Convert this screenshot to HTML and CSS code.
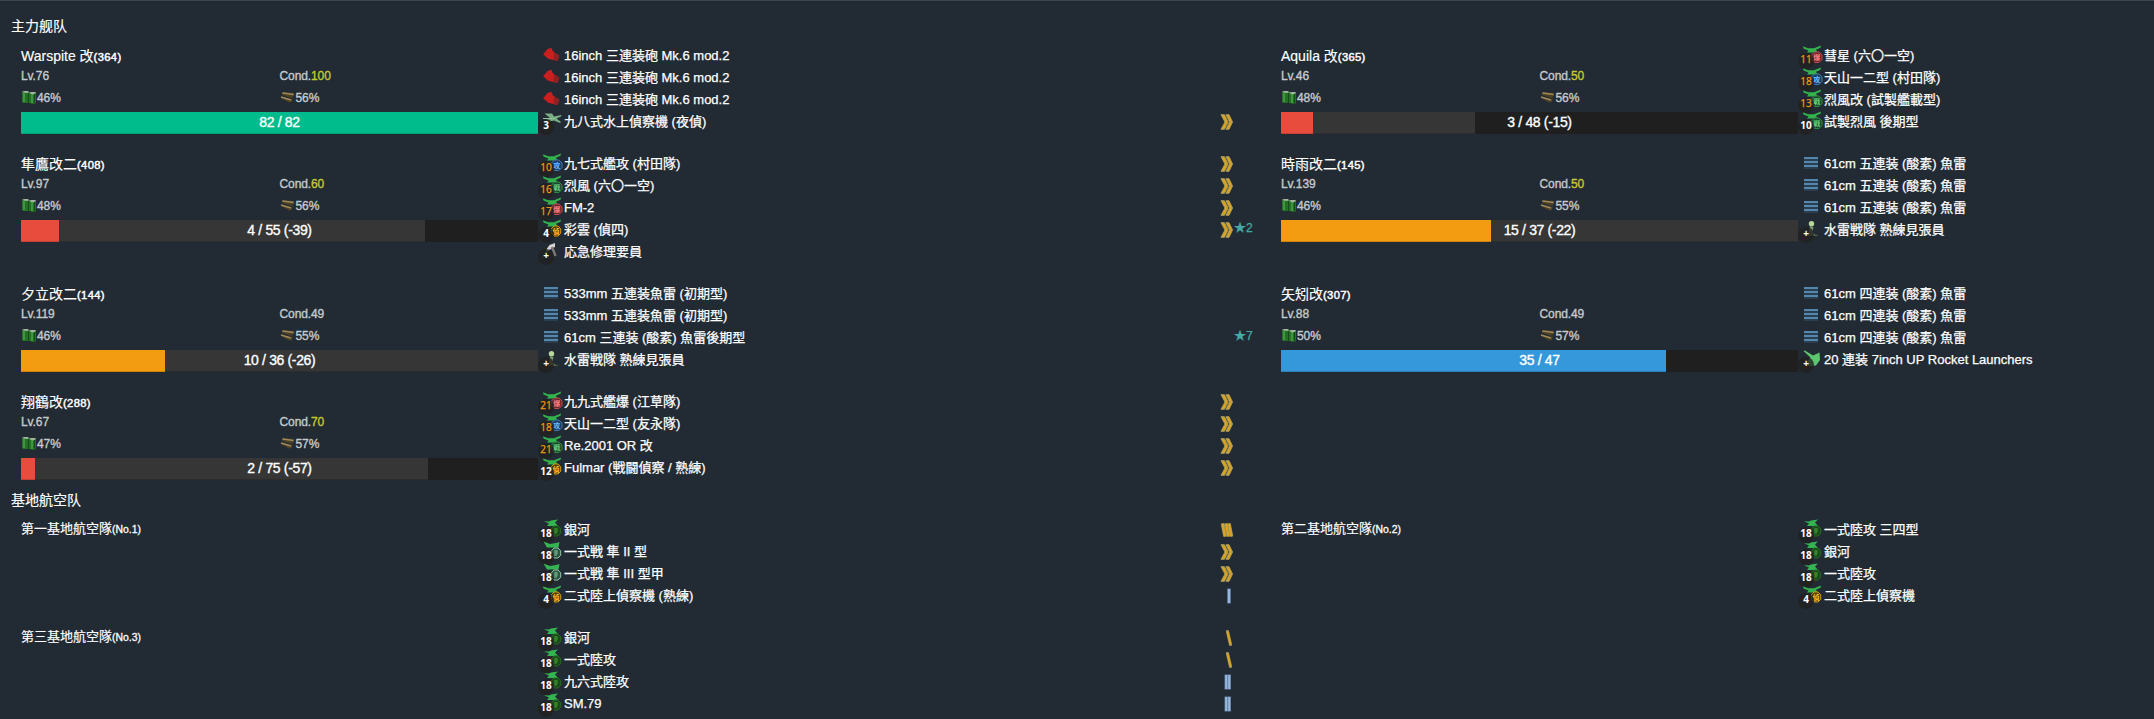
FILE: index.html
```
<!DOCTYPE html>
<html lang="zh">
<head>
<meta charset="utf-8">
<title>主力舰队</title>
<link rel="stylesheet" href="styles.css">
</head>
<body>
<svg class="defs" aria-hidden="true">
  <defs>
    <symbol id="wings" viewBox="0 0 22 22"><path d="M2 2.200 7 4.200h6L20 1.500 19.500 3.800l-4.500 2 1.500 2.700H6L7.500 6.500 2.500 4.600z" fill="#32b34b"/></symbol>
    <symbol id="fighter" viewBox="0 0 22 22"><use href="#wings"/><path d="m13.500 8h4.500l3 3v4.500l-3 3h-4.500l-3-3V11z" fill="#1d4a2c" stroke="#2f8a42"/><text class="glyph" x="15.700" y="15.900" fill="#62cf7d">戦</text></symbol>
    <symbol id="torpedo-bomber" viewBox="0 0 22 22"><use href="#wings"/><path d="m13.500 8h4.500l3 3v4.500l-3 3h-4.500l-3-3V11z" fill="#1f3f60" stroke="#3d77b3"/><text class="glyph" x="15.700" y="15.900" fill="#69bcff">攻</text></symbol>
    <symbol id="dive-bomber" viewBox="0 0 22 22"><use href="#wings"/><path d="m13.500 8h4.500l3 3v4.500l-3 3h-4.500l-3-3V11z" fill="#69292d" stroke="#b94b4f"/><text class="glyph" x="15.700" y="15.900" fill="#ff8085">爆</text></symbol>
    <symbol id="recon" viewBox="0 0 22 22"><use href="#wings"/><path d="m13 8h4l2.700 2.700v4.600L17 18h-4l-2.500-2.700v-4.600z" fill="#4a3b12" stroke="#d09a12"/><text class="glyph" x="15" y="15.900" fill="#ffc41d">偵</text></symbol>
    <symbol id="land-attack" viewBox="0 0 22 22"><path d="M3 3.200 8 3.600l2-1 7-1-3 3 3 3.500H6l2-2.500z" fill="#35b551"/><path d="m13 8h4l2.700 2.700v4.600L17 18h-4l-2.500-2.700v-4.600z" fill="#1c4a20" stroke="#266b1c"/><path d="M13 11h4m-4 2h4m-4 2h3m-1-5v5" stroke="#3d9626" fill="none"/></symbol>
    <symbol id="land-fighter" viewBox="0 0 22 22"><path d="M2.500 1.500 9 4l6-1 3.500-1-1 5.500H6z" fill="#35b551"/><path d="m13 8h4l2.700 2.700v4.600L17 18h-4l-2.500-2.700v-4.600z" fill="#2f5745" stroke="#8fc5a4"/><path d="M13 11h4m-4 2h4m-4 2h3m-1-5v5" stroke="#72b28b" fill="none"/></symbol>
    <symbol id="seaplane" viewBox="0 0 22 22"><path d="M3.500 3.500h7.500l2 3L20.500 5l-.5 1.500-4.500 2 4.500 3.500-1 1-6-2.500-4 1-4-2 4-1.500z" fill="#7aae84"/><path d="M2 8.500h12" stroke="#8fc59a"/></symbol>
    <symbol id="gun" viewBox="0 0 22 22"><path d="M2.200 10.200 6.500 5l4-1.200L12 7.500l6.500 4.300-2 5.200-4-1L7 14.700z" fill="#c9201f"/><path d="m13 8.300 5.500 3.500-2 5.200-4-1.200z" fill="#8b2224"/></symbol>
    <symbol id="torpedo" viewBox="0 0 22 22"><path d="M3 6h14M3 10h14M3 14h14" stroke="#5587ae" stroke-width="1.800"/><path d="M3 8h14M3 12h14M3 16h14" stroke="#31536d" stroke-width="1"/></symbol>
    <symbol id="lookout" viewBox="0 0 22 22"><circle cx="10.500" cy="5.800" r="2.700" fill="#b6d79a"/><path d="m9 8 3.500 1-1 5 3 3.500-7 .5z" fill="#78936a"/><path d="M7 17.300h9.500" stroke="#55704b"/></symbol>
    <symbol id="hammer" viewBox="0 0 22 22"><path d="m5 10 3.500-5L14 3v4L9 9.500 6.500 12z" fill="#d4d4d4"/><path d="m11 7 3.500 9" stroke="#7c7774" stroke-width="2.500"/></symbol>
    <symbol id="rocket" viewBox="0 0 22 22"><path d="M2.500 3 4 2.500 12 7.500l6.500-3 .5 7.500-4 5.500-7.500.5-1-5 3-3.500z" fill="#5bc66d"/></symbol>
    <symbol id="fuel" viewBox="0 0 16 14"><path d="M1 1.500h7V13H2L1 12zM8 2h7v11l-2 1-5-1z" fill="#256f27"/><path d="M3 3v9m8-8v9" stroke="#4fb34d" stroke-width="1.200"/><path d="M7.500 3v10M13.500 4v9" stroke="#174a1b"/><path d="m1 2 2-1h4l1 1.500L5 3zM8 3l2-1h4l1 1-3 1.500z" fill="#a3b5a0"/></symbol>
    <symbol id="ammo" viewBox="0 0 16 14"><path d="m2 2 12 1v3l-3 2-9-3zM1 7l10 2 2-2-1 5-3 .500L1 8z" fill="#4b4025"/><path d="m2.500 3 11 1.500M1 7l10 3" stroke="#a08a5b" stroke-width="1.400"/></symbol>
    <symbol id="alv7" viewBox="0 0 14 16"><path d="M1 .7h3.500L8 8l-3.500 7.300H1L5 8zM6 .7h3L12.500 8 9 15.300H6L9.500 8z" fill="#d9a521" stroke="#aa9a5c" stroke-width="1"/></symbol>
    <symbol id="alv6" viewBox="0 0 14 16"><path d="M2.500 1.500 5 14.500M6 1.500l2.500 13M9 1.500l2.500 13" stroke="#99905f" stroke-width="3.600"/><path d="M2.500 1.500 5 14.500M6 1.500l2.500 13M9 1.500l2.500 13" stroke="#d9a521" stroke-width="2.200"/></symbol>
    <symbol id="alv4" viewBox="0 0 14 16"><path d="m7.500 1.500 3 13" stroke="#99905f" stroke-width="3.200" stroke-linecap="round"/><path d="m7.500 1.500 3 13" stroke="#d9a521" stroke-width="2"/></symbol>
    <symbol id="alv2" viewBox="0 0 14 16"><path d="M4.500.500h6.500v15H4.500z" fill="#5c7ea3"/><path d="M6.200 1v14m3-14v14" stroke="#9ab7da" stroke-width="2"/></symbol>
    <symbol id="alv1" viewBox="0 0 14 16"><path d="M7 .500h4v15H7z" fill="#547395"/><path d="M9 1v14" stroke="#9ab7da" stroke-width="2"/></symbol>
  </defs>
</svg>

<main class="panel">
  <h2 class="title">主力舰队</h2>
  <div class="fleet">
    <section class="ship">
      <div class="info">
        <h3 class="name">Warspite 改<small>(364)</small></h3>
        <div class="stats"><span>Lv.76</span><span>Cond.<b>100</b></span></div>
        <div class="stats supply"><span><svg><use href="#fuel"/></svg>46%</span><span><svg><use href="#ammo"/></svg>56%</span></div>
        <div class="hp"><i class="now great" style="width:100%"></i><span>82 / 82</span></div>
      </div>
      <ul class="equips">
        <li><span class="icon"><svg><use href="#gun"/></svg></span><span class="item">16inch 三連装砲 Mk.6 mod.2</span></li>
        <li><span class="icon"><svg><use href="#gun"/></svg></span><span class="item">16inch 三連装砲 Mk.6 mod.2</span></li>
        <li><span class="icon"><svg><use href="#gun"/></svg></span><span class="item">16inch 三連装砲 Mk.6 mod.2</span></li>
        <li><span class="icon"><svg><use href="#seaplane"/></svg><em>3</em></span><span class="item">九八式水上偵察機 (夜偵)</span><svg class="alv"><use href="#alv7"/></svg><span class="star"></span></li>
      </ul>
    </section>

    <section class="ship">
      <div class="info">
        <h3 class="name">Aquila 改<small>(365)</small></h3>
        <div class="stats"><span>Lv.46</span><span>Cond.<b>50</b></span></div>
        <div class="stats supply"><span><svg><use href="#fuel"/></svg>48%</span><span><svg><use href="#ammo"/></svg>56%</span></div>
        <div class="hp"><i class="lost" style="width:37.5%"></i><i class="now danger" style="width:6.25%"></i><span>3 / 48 (-15)</span></div>
      </div>
      <ul class="equips">
        <li><span class="icon"><svg><use href="#dive-bomber"/></svg><em class="used">11</em></span><span class="item">彗星 (六〇一空)</span></li>
        <li><span class="icon"><svg><use href="#torpedo-bomber"/></svg><em class="used">18</em></span><span class="item">天山一二型 (村田隊)</span></li>
        <li><span class="icon"><svg><use href="#fighter"/></svg><em class="used">13</em></span><span class="item">烈風改 (試製艦載型)</span></li>
        <li><span class="icon"><svg><use href="#fighter"/></svg><em>10</em></span><span class="item">試製烈風 後期型</span></li>
      </ul>
    </section>

    <section class="ship">
      <div class="info">
        <h3 class="name">隼鷹改二<small>(408)</small></h3>
        <div class="stats"><span>Lv.97</span><span>Cond.<b>60</b></span></div>
        <div class="stats supply"><span><svg><use href="#fuel"/></svg>48%</span><span><svg><use href="#ammo"/></svg>56%</span></div>
        <div class="hp"><i class="lost" style="width:78.18%"></i><i class="now danger" style="width:7.27%"></i><span>4 / 55 (-39)</span></div>
      </div>
      <ul class="equips">
        <li><span class="icon"><svg><use href="#torpedo-bomber"/></svg><em class="used">10</em></span><span class="item">九七式艦攻 (村田隊)</span><svg class="alv"><use href="#alv7"/></svg><span class="star"></span></li>
        <li><span class="icon"><svg><use href="#fighter"/></svg><em class="used">16</em></span><span class="item">烈風 (六〇一空)</span><svg class="alv"><use href="#alv7"/></svg><span class="star"></span></li>
        <li><span class="icon"><svg><use href="#dive-bomber"/></svg><em class="used">17</em></span><span class="item">FM-2</span><svg class="alv"><use href="#alv7"/></svg><span class="star"></span></li>
        <li><span class="icon"><svg><use href="#recon"/></svg><em>4</em></span><span class="item">彩雲 (偵四)</span><svg class="alv"><use href="#alv7"/></svg><span class="star">★2</span></li>
        <li><span class="icon"><svg><use href="#hammer"/></svg><em>+</em></span><span class="item">応急修理要員</span></li>
      </ul>
    </section>

    <section class="ship">
      <div class="info">
        <h3 class="name">時雨改二<small>(145)</small></h3>
        <div class="stats"><span>Lv.139</span><span>Cond.<b>50</b></span></div>
        <div class="stats supply"><span><svg><use href="#fuel"/></svg>46%</span><span><svg><use href="#ammo"/></svg>55%</span></div>
        <div class="hp"><i class="lost" style="width:100%"></i><i class="now warn" style="width:40.54%"></i><span>15 / 37 (-22)</span></div>
      </div>
      <ul class="equips">
        <li><span class="icon"><svg><use href="#torpedo"/></svg></span><span class="item">61cm 五連装 (酸素) 魚雷</span></li>
        <li><span class="icon"><svg><use href="#torpedo"/></svg></span><span class="item">61cm 五連装 (酸素) 魚雷</span></li>
        <li><span class="icon"><svg><use href="#torpedo"/></svg></span><span class="item">61cm 五連装 (酸素) 魚雷</span></li>
        <li><span class="icon"><svg><use href="#lookout"/></svg><em>+</em></span><span class="item">水雷戦隊 熟練見張員</span></li>
      </ul>
    </section>

    <section class="ship">
      <div class="info">
        <h3 class="name">夕立改二<small>(144)</small></h3>
        <div class="stats"><span>Lv.119</span><span>Cond.49</span></div>
        <div class="stats supply"><span><svg><use href="#fuel"/></svg>46%</span><span><svg><use href="#ammo"/></svg>55%</span></div>
        <div class="hp"><i class="lost" style="width:100%"></i><i class="now warn" style="width:27.78%"></i><span>10 / 36 (-26)</span></div>
      </div>
      <ul class="equips">
        <li><span class="icon"><svg><use href="#torpedo"/></svg></span><span class="item">533mm 五連装魚雷 (初期型)</span></li>
        <li><span class="icon"><svg><use href="#torpedo"/></svg></span><span class="item">533mm 五連装魚雷 (初期型)</span></li>
        <li><span class="icon"><svg><use href="#torpedo"/></svg></span><span class="item">61cm 三連装 (酸素) 魚雷後期型</span><span class="star">★7</span></li>
        <li><span class="icon"><svg><use href="#lookout"/></svg><em>+</em></span><span class="item">水雷戦隊 熟練見張員</span></li>
      </ul>
    </section>

    <section class="ship">
      <div class="info">
        <h3 class="name">矢矧改<small>(307)</small></h3>
        <div class="stats"><span>Lv.88</span><span>Cond.49</span></div>
        <div class="stats supply"><span><svg><use href="#fuel"/></svg>50%</span><span><svg><use href="#ammo"/></svg>57%</span></div>
        <div class="hp"><i class="now fine" style="width:74.47%"></i><span>35 / 47</span></div>
      </div>
      <ul class="equips">
        <li><span class="icon"><svg><use href="#torpedo"/></svg></span><span class="item">61cm 四連装 (酸素) 魚雷</span></li>
        <li><span class="icon"><svg><use href="#torpedo"/></svg></span><span class="item">61cm 四連装 (酸素) 魚雷</span></li>
        <li><span class="icon"><svg><use href="#torpedo"/></svg></span><span class="item">61cm 四連装 (酸素) 魚雷</span></li>
        <li><span class="icon"><svg><use href="#rocket"/></svg><em>+</em></span><span class="item">20 連装 7inch UP Rocket Launchers</span></li>
      </ul>
    </section>

    <section class="ship">
      <div class="info">
        <h3 class="name">翔鶴改<small>(288)</small></h3>
        <div class="stats"><span>Lv.67</span><span>Cond.<b>70</b></span></div>
        <div class="stats supply"><span><svg><use href="#fuel"/></svg>47%</span><span><svg><use href="#ammo"/></svg>57%</span></div>
        <div class="hp"><i class="lost" style="width:78.67%"></i><i class="now danger" style="width:2.67%"></i><span>2 / 75 (-57)</span></div>
      </div>
      <ul class="equips">
        <li><span class="icon"><svg><use href="#dive-bomber"/></svg><em class="used">21</em></span><span class="item">九九式艦爆 (江草隊)</span><svg class="alv"><use href="#alv7"/></svg><span class="star"></span></li>
        <li><span class="icon"><svg><use href="#torpedo-bomber"/></svg><em class="used">18</em></span><span class="item">天山一二型 (友永隊)</span><svg class="alv"><use href="#alv7"/></svg><span class="star"></span></li>
        <li><span class="icon"><svg><use href="#fighter"/></svg><em class="used">21</em></span><span class="item">Re.2001 OR 改</span><svg class="alv"><use href="#alv7"/></svg><span class="star"></span></li>
        <li><span class="icon"><svg><use href="#recon"/></svg><em>12</em></span><span class="item">Fulmar (戦闘偵察 / 熟練)</span><svg class="alv"><use href="#alv7"/></svg><span class="star"></span></li>
      </ul>
    </section>
  </div>

  <h2 class="title">基地航空队</h2>
  <div class="fleet">
    <section class="ship">
      <h3 class="name base">第一基地航空隊<small>(No.1)</small></h3>
      <ul class="equips">
        <li><span class="icon"><svg><use href="#land-attack"/></svg><em>18</em></span><span class="item">銀河</span><svg class="alv"><use href="#alv6"/></svg><span class="star"></span></li>
        <li><span class="icon"><svg><use href="#land-fighter"/></svg><em>18</em></span><span class="item">一式戦 隼 II 型</span><svg class="alv"><use href="#alv7"/></svg><span class="star"></span></li>
        <li><span class="icon"><svg><use href="#land-fighter"/></svg><em>18</em></span><span class="item">一式戦 隼 III 型甲</span><svg class="alv"><use href="#alv7"/></svg><span class="star"></span></li>
        <li><span class="icon"><svg><use href="#recon"/></svg><em>4</em></span><span class="item">二式陸上偵察機 (熟練)</span><svg class="alv"><use href="#alv1"/></svg><span class="star"></span></li>
      </ul>
    </section>
    <section class="ship">
      <h3 class="name base">第二基地航空隊<small>(No.2)</small></h3>
      <ul class="equips">
        <li><span class="icon"><svg><use href="#land-attack"/></svg><em>18</em></span><span class="item">一式陸攻 三四型</span></li>
        <li><span class="icon"><svg><use href="#land-attack"/></svg><em>18</em></span><span class="item">銀河</span></li>
        <li><span class="icon"><svg><use href="#land-attack"/></svg><em>18</em></span><span class="item">一式陸攻</span></li>
        <li><span class="icon"><svg><use href="#recon"/></svg><em>4</em></span><span class="item">二式陸上偵察機</span></li>
      </ul>
    </section>
    <section class="ship">
      <h3 class="name base">第三基地航空隊<small>(No.3)</small></h3>
      <ul class="equips">
        <li><span class="icon"><svg><use href="#land-attack"/></svg><em>18</em></span><span class="item">銀河</span><svg class="alv"><use href="#alv4"/></svg><span class="star"></span></li>
        <li><span class="icon"><svg><use href="#land-attack"/></svg><em>18</em></span><span class="item">一式陸攻</span><svg class="alv"><use href="#alv4"/></svg><span class="star"></span></li>
        <li><span class="icon"><svg><use href="#land-attack"/></svg><em>18</em></span><span class="item">九六式陸攻</span><svg class="alv"><use href="#alv2"/></svg><span class="star"></span></li>
        <li><span class="icon"><svg><use href="#land-attack"/></svg><em>18</em></span><span class="item">SM.79</span><svg class="alv"><use href="#alv2"/></svg><span class="star"></span></li>
      </ul>
    </section>
  </div>
</main>
</body>
</html>
```
FILE: styles.css
```
* { box-sizing: border-box; margin: 0; padding: 0; }
body {
  height: 719px;
  overflow: hidden;
  background: #222b33;
  color: #fff;
  font: 14px/20px "Liberation Sans", "Noto Sans CJK JP", sans-serif;
  -webkit-text-stroke: .35px;
}
.defs { position: absolute; width: 0; height: 0; }
.glyph { font: 700 7px "Noto Sans CJK JP", sans-serif; text-anchor: middle; -webkit-text-stroke: 0; }
.panel { border-top: 1px solid #3a4650; padding: 15px 0 0 11px; }
.title { font-size: 14px; font-weight: 400; line-height: 20px; margin-bottom: 8px; font-family: "Liberation Sans", "Noto Sans CJK SC", sans-serif; -webkit-text-stroke: .15px; }
.fleet + .title { margin-top: 10px; }
.fleet { display: grid; grid-template-columns: 1260px 1fr; row-gap: 18px; padding-left: 10px; }
.ship { display: grid; grid-template-columns: 517px 1fr; align-items: start; padding-right: 30px; }
.ship:nth-child(even) { padding-right: 0; }
.name { font-size: 14px; font-weight: 400; line-height: 24px; height: 23px; white-space: nowrap; -webkit-text-stroke: .15px; }
.name small { font-size: 11.2px; letter-spacing: .35px; -webkit-text-stroke: .45px; }
.name.base { font-size: 13px; line-height: 22px; }
.name.base small { font-size: 10.4px; letter-spacing: 0; -webkit-text-stroke: .3px; }
.stats { display: grid; grid-template-columns: 1fr 1fr; height: 19px; font-size: 12px; line-height: 19px; color: #c5cacd; letter-spacing: -.1px; }
.stats b { font-weight: 400; color: #c8c832; }
.supply { height: 26px; line-height: 24px; }
.supply span { display: flex; }
.supply svg { width: 16px; height: 14px; margin-top: 4px; }
.hp { display: grid; height: 22px; background: #1f1f1f; line-height: 21px; text-align: center; }
.hp > * { grid-area: 1 / 1; }
.hp span { z-index: 1; font-size: 14px; letter-spacing: -.35px; }
.hp i { height: 22px; box-shadow: inset 0 -1px rgba(0, 0, 0, .15); }
.lost { background: #363636; }
.great { background: #00bc8c; }
.fine { background: #3498db; }
.warn { background: #f39c12; }
.danger { background: #e74c3c; }
.equips { list-style: none; padding-bottom: 2px; font-size: 13px; line-height: 24px; -webkit-text-stroke: .25px; }
.equips li { display: flex; height: 22px; }
.icon { position: relative; width: 26px; height: 22px; padding-left: 3px; }
.icon svg { display: block; width: 22px; height: 22px; }
.icon em {
  position: absolute;
  left: 0;
  top: 9px;
  width: 16px;
  height: 16px;
  border-radius: 50%;
  background: rgba(33, 33, 33, .8);
  font: 700 10px/12px "Open Sans", sans-serif;
  text-align: center;
  -webkit-text-stroke: 0;
}
.icon em.used { color: #f39c12; font-weight: 500; -webkit-text-stroke: .25px; }
.item { flex: 1; white-space: nowrap; }
.alv { width: 14px; height: 16px; margin-top: 4px; }
.star { width: 17px; color: #45a9a5; font-size: 12px; line-height: 21px; white-space: nowrap; }
```
